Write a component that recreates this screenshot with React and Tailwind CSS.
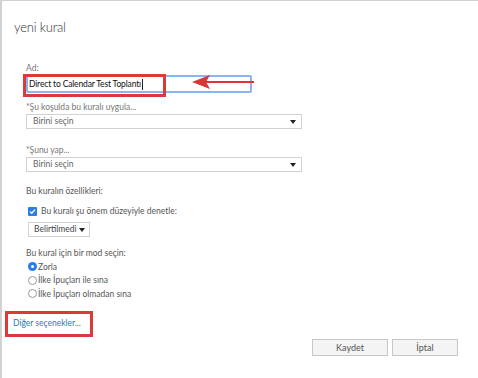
import React from 'react'

function Caret({ className = '' }) {
    return (
        <svg width="6" height="4" viewBox="0 0 6 4" className={className}>
            <path d="M0 0 L6 0 L3 4 Z" fill="#222" />
        </svg>
    )
}

function Select({ value, className = '' }) {
    return (
        <div className={`flex items-center justify-between border border-[#d2d2d2] bg-white h-[15px] pl-[6px] pr-[5px] ${className}`}>
            <span className="text-[8.5px] text-[#666] leading-none">{value}</span>
            <Caret />
        </div>
    )
}

function Radio({ checked, label }) {
    return (
        <div className="flex items-center h-[13.5px]">
            {checked ? (
                <span className="w-[9px] h-[9px] rounded-full bg-[#2b7de9] flex items-center justify-center">
                    <span className="w-[3px] h-[3px] rounded-full bg-white" />
                </span>
            ) : (
                <span className="w-[9px] h-[9px] rounded-full border border-[#9a9a9a] bg-white" />
            )}
            <span className="text-[8.5px] text-[#555] ml-[1px] leading-none">{label}</span>
        </div>
    )
}

export default function App() {
    return (
        <div
            className="relative w-[478px] h-[378px] bg-white border-t border-l-2 border-[#d2d2d2] overflow-hidden"
            style={{ fontFamily: 'Lato, "Open Sans", sans-serif' }}
        >
            {/* scrollbar sliver */}
            <div className="absolute left-[-2px] top-[122px] w-[2px] h-[11px] bg-[#8c8c8c]" />

            <h1 className="ml-[12px] mt-[16px] text-[13px] font-light tracking-[-0.2px] leading-[20px] text-[#333]">
                yeni kural
            </h1>

            <div className="pl-[24px] w-[302px] mt-[26px]">
                <p className="text-[8.5px] text-[#777] leading-[11px]">Ad:</p>
                <div className="w-[226px] h-[18px] border-2 border-[#8ab4f2] rounded-[2px] flex items-center pl-[1px] mt-[1px]">
                    <span className="text-[8.5px] text-[#111] tracking-[-0.15px] leading-none">Direct to Calendar Test Toplantı</span>
                    <span className="w-px h-[11px] bg-[#222] ml-[1px]" />
                </div>

                <p className="text-[8.5px] text-[#777] leading-[13px] mt-[8px]">*Şu koşulda bu kuralı uygula...</p>
                <Select value="Birini seçin" className="w-[276px]" />

                <p className="text-[8.5px] text-[#777] leading-[13px] mt-[15px]">*Şunu yap...</p>
                <Select value="Birini seçin" className="w-[276px]" />

                <p className="text-[8.5px] text-[#555] leading-[13px] mt-[13px]">Bu kuralın özellikleri:</p>

                <div className="flex items-center h-[13px] mt-[7px] pl-[2px]">
                    <span className="w-[9px] h-[9px] rounded-[1px] bg-[#2b7de9] flex items-center justify-center">
                        <svg width="7" height="7" viewBox="0 0 7 7">
                            <path d="M1 3.6 L2.8 5.3 L6 1.6" fill="none" stroke="white" strokeWidth="1.3" />
                        </svg>
                    </span>
                    <span className="text-[8.5px] text-[#555] ml-[4px] leading-none">Bu kuralı şu önem düzeyiyle denetle:</span>
                </div>

                <div className="ml-[2px] mt-[4px] w-[62px] h-[15px] border border-[#d2d2d2] flex items-center justify-between pl-[5px] pr-[4px]">
                    <span className="text-[8.5px] text-[#444] leading-none">Belirtilmedi</span>
                    <Caret />
                </div>

                <p className="text-[8.5px] text-[#555] leading-[13px] mt-[10px]">Bu kural için bir mod seçin:</p>
                <div className="pl-[2px]">
                    <Radio checked label="Zorla" />
                    <Radio label="İlke İpuçları ile sına" />
                    <Radio label="İlke İpuçları olmadan sına" />
                </div>
            </div>

            <p className="ml-[11px] mt-[16px] text-[8.5px] text-[#2a78d6] leading-[13px]">Diğer seçenekler...</p>

            <div className="flex justify-end gap-[4px] pr-[20px] mt-[9px]">
                <button className="w-[76px] h-[17px] bg-[#f4f4f4] border border-[#c4c8c8] text-[9px] text-[#555] leading-none">
                    Kaydet
                </button>
                <button className="w-[66px] h-[17px] bg-[#f4f4f4] border border-[#c4c8c8] text-[9px] text-[#555] leading-none">
                    İptal
                </button>
            </div>

            {/* annotations */}
            <div className="absolute left-[21px] top-[73px] w-[143px] h-[23px] border-[3px] border-[#da3a3a]" />
            <svg className="absolute left-[188px] top-[72px]" width="66" height="18" viewBox="0 0 66 18">
                <path d="M2 9 L20 2 L16 9 L20 16 Z" fill="#d93636" />
                <line x1="16" y1="9" x2="64" y2="9" stroke="#d93636" strokeWidth="2" />
            </svg>
            <div className="absolute left-[3px] top-[310px] w-[88px] h-[26px] border-[3px] border-[#da3a3a]" />
        </div>
    )
}
